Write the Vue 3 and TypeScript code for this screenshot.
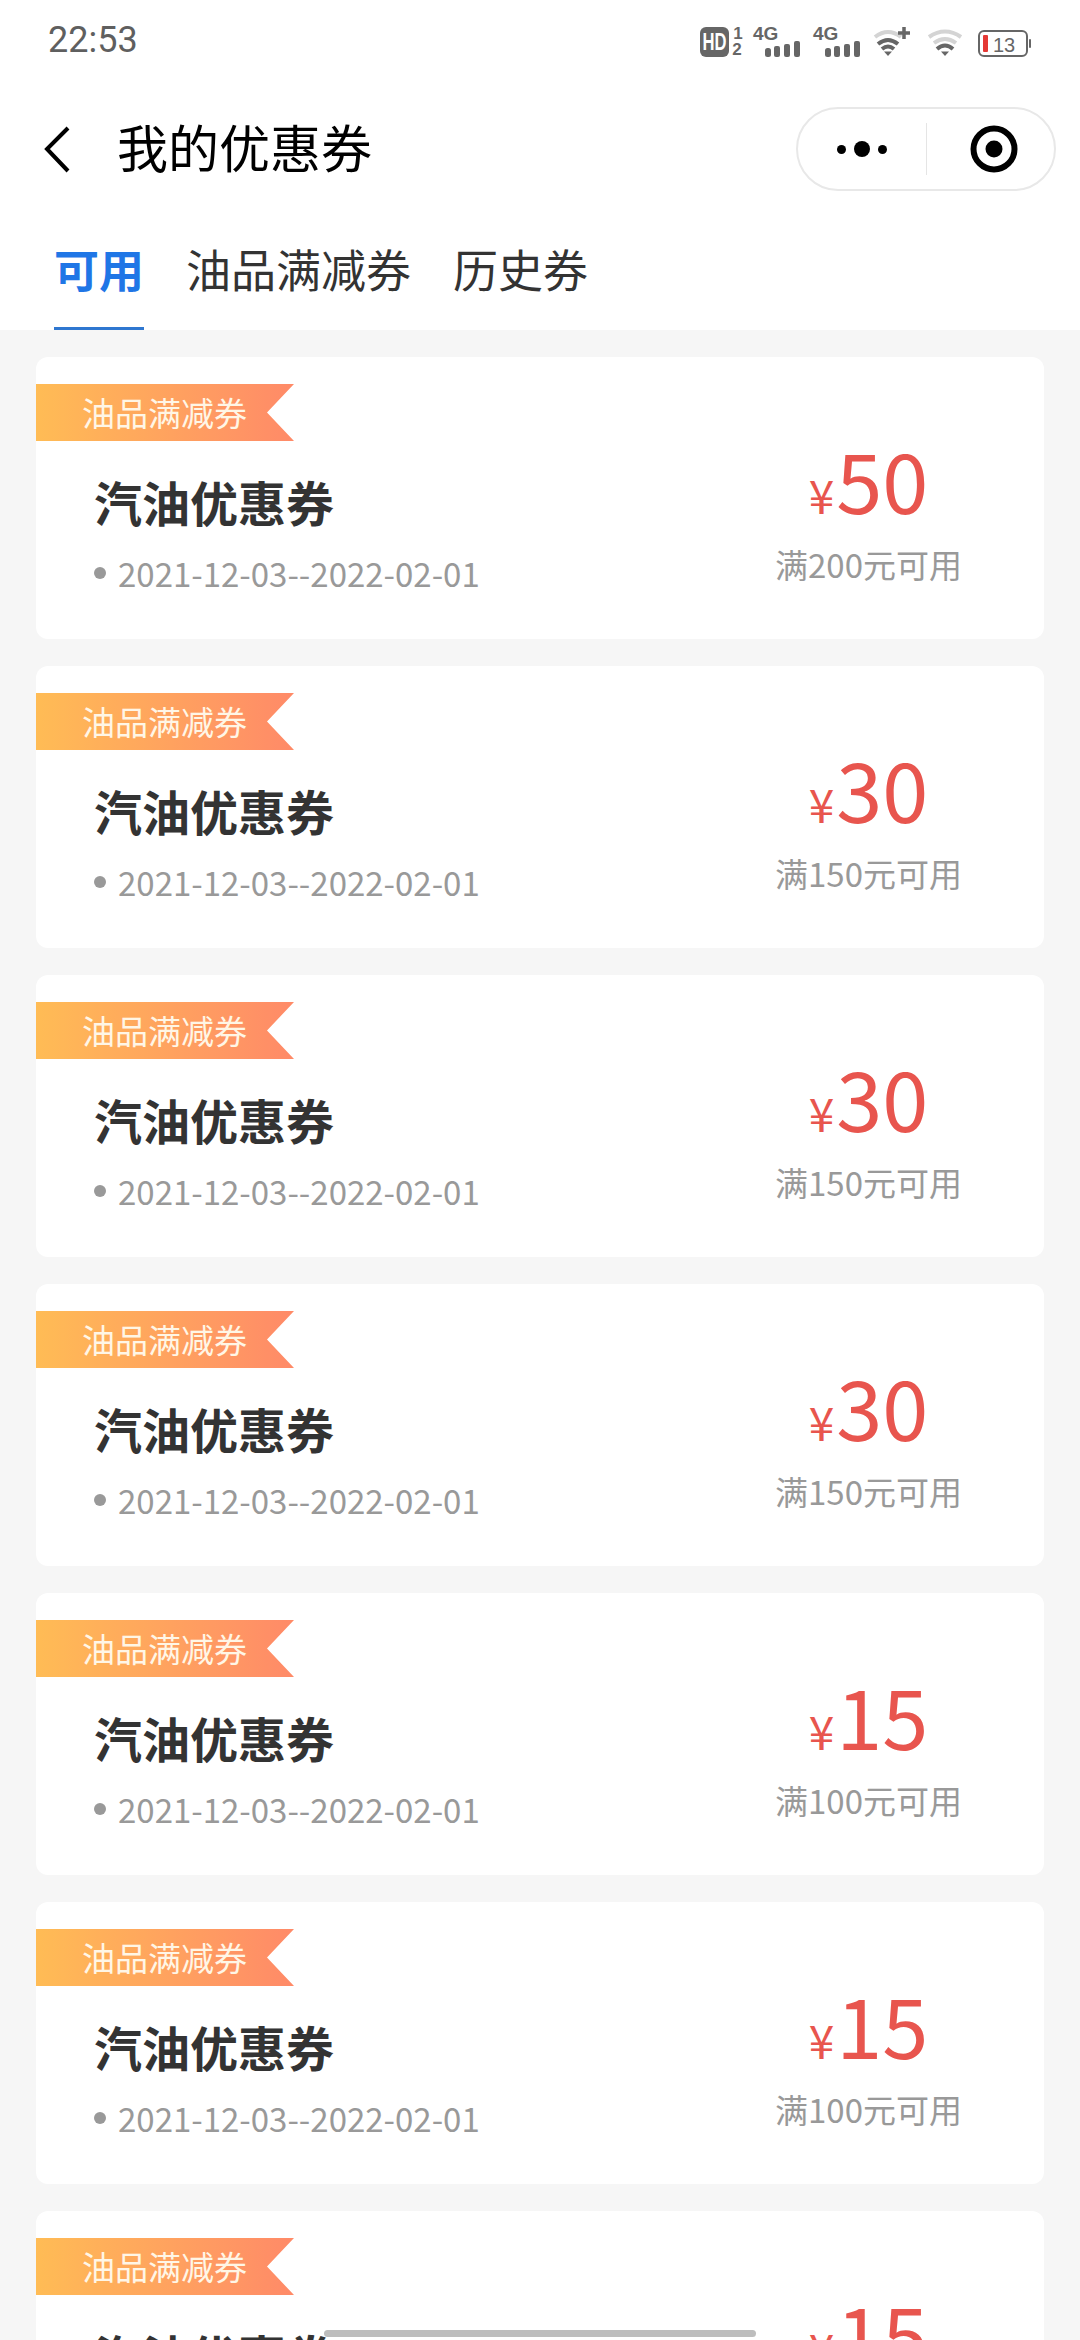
<script setup lang="ts">
interface Coupon {
  amount: number
  limit: number
}

const coupons: Coupon[] = [
  { amount: 50, limit: 200 },
  { amount: 30, limit: 150 },
  { amount: 30, limit: 150 },
  { amount: 30, limit: 150 },
  { amount: 15, limit: 100 },
  { amount: 15, limit: 100 },
  { amount: 15, limit: 100 },
]

const tabs = ['可用', '油品满减券', '历史券']
</script>

<template>
  <div class="page">
    <header class="top">
      <div class="status">
        <span class="time">22:53</span>
        <div class="status-icons">
          <svg width="43" height="32" viewBox="0 0 43 32">
            <rect x="0" y="1" width="29" height="30" rx="6" fill="#666" />
            <text x="14.500" y="24" text-anchor="middle" class="hd" textLength="24" lengthAdjust="spacingAndGlyphs">HD</text>
            <text x="38" y="13" text-anchor="middle" class="sim">1</text>
            <text x="37" y="29" text-anchor="middle" class="sim">2</text>
          </svg>
          <svg class="net" width="47" height="32" viewBox="0 0 47 32">
            <text x="0" y="14" class="g4">4G</text>
            <rect x="12" y="22" width="6" height="9" rx="2.500" fill="#666" />
            <rect x="21" y="20" width="6" height="11" rx="2" fill="#666" />
            <rect x="31" y="18" width="6" height="13" rx="2" fill="#666" />
            <rect x="41" y="15" width="6" height="16" rx="2" fill="#666" />
          </svg>
          <svg class="net" width="47" height="32" viewBox="0 0 47 32">
            <text x="0" y="14" class="g4">4G</text>
            <rect x="12" y="22" width="6" height="9" rx="2.500" fill="#666" />
            <rect x="21" y="20" width="6" height="11" rx="2" fill="#666" />
            <rect x="31" y="18" width="6" height="13" rx="2" fill="#666" />
            <rect x="41" y="15" width="6" height="16" rx="2" fill="#666" />
          </svg>
          <svg class="wifi-a" width="37" height="32" viewBox="0 0 37 32">
            <path d="M2 11 Q15 1 28 11" fill="none" stroke="#d4d4d4" stroke-width="4" />
            <path d="M5 18 Q15 10 25 18" fill="none" stroke="#666" stroke-width="4" />
            <path d="M9 23 Q15 18 21 23" fill="none" stroke="#666" stroke-width="4" />
            <path d="M11 25.500 H19 L15 30 Z" fill="#666" />
            <path d="M31 1 V13 M25 7 H37" stroke="#666" stroke-width="3.500" />
          </svg>
          <svg class="wifi-b" width="36" height="32" viewBox="0 0 36 32">
            <path d="M2 11 Q18 0 34 11" fill="none" stroke="#d4d4d4" stroke-width="4" />
            <path d="M7 17 Q18 9 29 17" fill="none" stroke="#d4d4d4" stroke-width="4" />
            <path d="M10 23 Q18 16 26 23" fill="none" stroke="#666" stroke-width="4" />
            <path d="M14 25.500 H22 L18 30 Z" fill="#666" />
          </svg>
          <svg class="battery" width="54" height="32" viewBox="0 0 54 32">
            <rect x="1" y="5" width="48" height="25" rx="5" fill="none" stroke="#666" stroke-width="2" />
            <rect x="5" y="9" width="5" height="17" rx="1" fill="#e53935" />
            <rect x="51" y="13" width="2" height="9" rx="1" fill="#666" />
            <text x="26" y="25.500" text-anchor="middle" class="batt">13</text>
          </svg>
        </div>
      </div>

      <div class="nav">
        <svg class="back" width="26" height="48" viewBox="0 0 26 48">
          <path d="M24 3 L3 24 L24 46" fill="none" stroke="#000" stroke-width="4" />
        </svg>
        <h1 class="title">我的优惠券</h1>
        <div class="capsule">
          <div class="cap-left">
            <span class="dot small"></span>
            <span class="dot big"></span>
            <span class="dot small"></span>
          </div>
          <span class="cap-line"></span>
          <div class="cap-right">
            <svg width="48" height="48" viewBox="0 0 48 48">
              <circle cx="24" cy="24" r="20.500" fill="none" stroke="#000" stroke-width="6" />
              <circle cx="24" cy="24" r="8.500" fill="#000" />
            </svg>
          </div>
        </div>
      </div>

      <nav class="tabs">
        <div
          v-for="(tab, i) in tabs"
          :key="tab"
          class="tab"
          :class="{ active: i === 0 }"
        >
          {{ tab }}
        </div>
      </nav>
    </header>

    <main class="list">
      <article v-for="(c, i) in coupons" :key="i" class="card">
        <div class="ribbon">油品满减券</div>
        <div class="body">
          <div class="info">
            <div class="name">汽油优惠券</div>
            <div class="date"><span class="bullet"></span>2021-12-03--2022-02-01</div>
          </div>
          <div class="value">
            <div class="price"><span class="yen">¥</span><span class="amount">{{ c.amount }}</span></div>
            <div class="limit">满{{ c.limit }}元可用</div>
          </div>
        </div>
      </article>
    </main>

    <div class="home-bar"></div>
  </div>
</template>

<style>
html,
body {
  margin: 0;
  padding: 0;
  overflow: hidden;
  background: #f6f6f6;
}
</style>

<style scoped>
.page {
  position: relative;
  width: 1080px;
  height: 2340px;
  overflow: hidden;
  background: #f6f6f6;
  font-family: "Noto Sans CJK SC", "Noto Sans", sans-serif;
}

.top {
  background: #fff;
}

.status {
  height: 82px;
  padding: 0 48px;
  display: flex;
  align-items: center;
  justify-content: space-between;
}

.time {
  font-family: Roboto, sans-serif;
  font-size: 36px;
  font-weight: 400;
  color: #5f5f5f;
  margin-top: -2px;
}

.status-icons {
  display: flex;
  align-items: center;
  padding-top: 2px;
}

.status-icons svg {
  overflow: visible;
}

.net {
  margin-left: 10px;
}

.net + .net {
  margin-left: 13px;
}

.wifi-a {
  margin-left: 13px;
}

.wifi-b {
  margin-left: 17px;
}

.battery {
  margin-left: 15px;
}

.hd {
  font: 700 23px "Liberation Sans", sans-serif;
  fill: #fff;
}

.sim {
  font: 700 17px "Liberation Sans", sans-serif;
  fill: #666;
}

.g4 {
  font: 700 19px "Liberation Sans", sans-serif;
  fill: #666;
}

.batt {
  font: 400 20px "Liberation Sans", sans-serif;
  fill: #666;
}

.nav {
  height: 134px;
  padding: 0 24px 0 44px;
  display: flex;
  align-items: center;
}

.back {
  flex: none;
}

.title {
  margin: -6px 0 0 47px;
  flex: 1;
  font-size: 51px;
  font-weight: 400;
  color: #000;
}

.capsule {
  width: 260px;
  height: 84px;
  box-sizing: border-box;
  border: 2px solid #e8e8e8;
  border-radius: 42px;
  display: flex;
  align-items: center;
}

.cap-left {
  width: 128px;
  display: flex;
  align-items: center;
  justify-content: center;
  gap: 8px;
}

.dot {
  background: #000;
  border-radius: 50%;
}

.dot.small {
  width: 9px;
  height: 9px;
}

.dot.big {
  width: 16px;
  height: 16px;
}

.cap-line {
  width: 1px;
  height: 52px;
  background: #e5e5e5;
}

.cap-right {
  flex: 1;
  display: flex;
  align-items: center;
  justify-content: center;
  padding-left: 6px;
}

.tabs {
  height: 114px;
  padding-left: 54px;
  display: flex;
  gap: 42px;
}

.tab {
  height: 114px;
  box-sizing: border-box;
  padding-top: 23px;
  font-size: 45px;
  line-height: 60px;
  color: #333;
}

.tab.active {
  width: 90px;
  text-align: center;
  font-weight: 700;
  color: #1f76e6;
  border-bottom: 3px solid #2f77d0;
}

.list {
  padding: 27px 36px 0;
  display: flex;
  flex-direction: column;
  gap: 27px;
}

.card {
  height: 282px;
  flex: none;
  background: #fff;
  border-radius: 12px;
  padding-top: 27px;
  box-sizing: border-box;
}

.ribbon {
  width: 258px;
  height: 57px;
  box-sizing: border-box;
  padding-left: 46px;
  font-size: 33px;
  line-height: 56px;
  color: #fff6e6;
  background: linear-gradient(90deg, #ffbc55, #ff8a68);
  clip-path: polygon(0 0, 100% 0, 231px 50%, 100% 100%, 0 100%);
}

.body {
  display: flex;
  justify-content: space-between;
  padding: 0 82px 0 58px;
}

.info {
  padding-top: 25px;
}

.name {
  font-size: 48px;
  line-height: 70px;
  font-weight: 700;
  color: #333;
}

.date {
  margin-top: 9px;
  display: flex;
  align-items: center;
  font-size: 33px;
  line-height: 56px;
  color: #999;
}

.bullet {
  width: 12px;
  height: 12px;
  margin: 0 12px 0 0;
  border-radius: 50%;
  background: #999;
}

.value {
  margin-top: -8px;
  text-align: center;
}

.price {
  display: flex;
  align-items: baseline;
  justify-content: center;
  color: #e8554e;
  line-height: 90px;
  height: 107px;
}

.yen {
  font-size: 46px;
  margin-right: 2px;
}

.amount {
  font-size: 83px;
  line-height: 90px;
}

.limit {
  font-size: 33px;
  line-height: 48px;
  color: #999;
}

.home-bar {
  position: absolute;
  left: 324px;
  top: 2330px;
  width: 432px;
  height: 7px;
  border-radius: 4px;
  background: #bdbdbd;
}
</style>
